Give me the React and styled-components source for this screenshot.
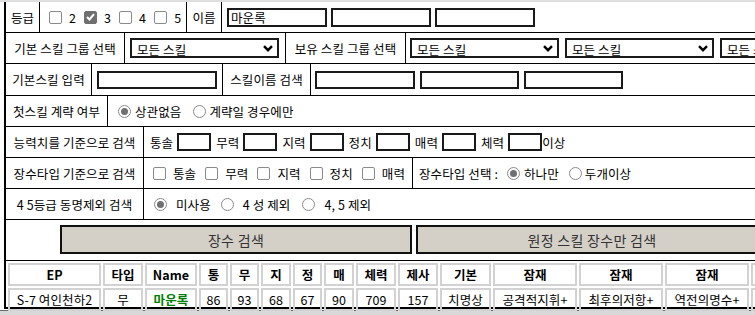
import React from "react";
import styled, { createGlobalStyle } from "styled-components";

const GlobalStyle = createGlobalStyle`
  html, body {
    margin: 0;
    padding: 0;
    background: #fff;
    overflow: hidden;
  }
  body {
    font-family: "Noto Sans CJK KR", "Noto Sans", sans-serif;
    font-size: 12.5px;
    color: #000;
    letter-spacing: 0.1px;
  }
`;

const Page = styled.div`
  width: 755px;
  height: 315px;
  overflow: hidden;
`;

const TopBar = styled.div`
  height: 2px;
  background: #dedede;
`;

const Frame = styled.div`
  margin-left: 4px;
  width: 1100px;
  border-left: 2px solid #000;
  border-bottom: 2px solid #000;
`;

const Row = styled.div`
  display: flex;
  box-sizing: border-box;
  height: ${(p) => p.$h || 31}px;
  border-bottom: ${(p) => (p.$last ? "none" : "1px solid #000")};
`;

const Label = styled.div`
  flex: 0 0 ${(p) => p.$w}px;
  min-width: 0;
  box-sizing: border-box;
  border-right: 1px solid #000;
  display: flex;
  align-items: center;
  justify-content: center;
  white-space: nowrap;
`;

const Field = styled.div`
  flex: ${(p) => (p.$w ? `0 0 ${p.$w}px` : "1 1 auto")};
  min-width: 0;
  box-sizing: border-box;
  border-right: ${(p) => (p.$w ? "1px solid #000" : "none")};
  display: flex;
  align-items: center;
  gap: ${(p) => p.$gap || 0}px;
  padding-left: ${(p) => p.$pl ?? 6}px;
  white-space: nowrap;
`;

const Text = styled.span`
  margin-right: ${(p) => p.$mr || 0}px;
`;

const TextInput = styled.input`
  box-sizing: border-box;
  flex: none;
  width: ${(p) => p.$w}px;
  height: ${(p) => p.$h || 18}px;
  margin: 0 ${(p) => p.$mr || 0}px 0 0;
  border: 2px solid #1a1a1a;
  padding: 0 2px;
  font: inherit;
  letter-spacing: inherit;
  color: #000;
  background: #fff;
  outline: none;
`;

const SelectWrap = styled.span`
  position: relative;
  display: inline-block;
  flex: none;
  height: 20px;
`;

const Select = styled.select`
  appearance: none;
  box-sizing: border-box;
  width: 149px;
  height: 20px;
  border: 2px solid #1a1a1a;
  border-radius: 0;
  padding: 0 0 0 5px;
  font: inherit;
  letter-spacing: inherit;
  color: #000;
  background: #fff;
`;

const Chevron = styled.svg`
  position: absolute;
  right: 6px;
  top: 7px;
  pointer-events: none;
`;

const Option = styled.label`
  display: inline-flex;
  align-items: center;
  flex: none;
  gap: ${(p) => p.$gap ?? 7}px;
  margin-right: ${(p) => p.$mr ?? 8}px;
  white-space: nowrap;
`;

const Box = styled.span`
  flex: none;
  box-sizing: border-box;
  width: 13px;
  height: 13px;
  border-radius: ${(p) => (p.$round ? "50%" : "2px")};
  border: 1px solid ${(p) => (p.$on && !p.$round ? "#6f6f6f" : "#8a8a8a")};
  background: ${(p) => (p.$on && !p.$round ? "#6f6f6f" : "#fff")};
  display: inline-flex;
  align-items: center;
  justify-content: center;
`;

const Dot = styled.span`
  width: 7px;
  height: 7px;
  border-radius: 50%;
  background: #707070;
`;

const ButtonRow = styled(Row)`
  padding: 5px 0 0 54px;
  gap: 4px;
  align-items: flex-start;
`;

const Button = styled.button`
  box-sizing: border-box;
  width: 352px;
  height: 29px;
  flex: none;
  background: #d4d0c8;
  border: 2px solid #111;
  font-family: inherit;
  font-size: 14px;
  letter-spacing: 0.3px;
  color: #333;
  padding: 0;
`;

const TableRow = styled(Row)`
  height: 46px;
`;

const Grid = styled.table`
  border-collapse: separate;
  border-spacing: 2px;
  height: 46px;
`;

const Cell = styled.td`
  box-sizing: border-box;
  width: ${(p) => p.$w}px;
  min-width: ${(p) => p.$w}px;
  max-width: ${(p) => p.$w}px;
  height: 20px;
  padding: 0;
  border: 2px solid #d2d2d2;
  text-align: center;
  white-space: nowrap;
  overflow: hidden;
  font-weight: ${(p) => (p.$head || p.$green ? "bold" : "normal")};
  color: ${(p) => (p.$green ? "#008000" : "#000")};
`;

const Footer = styled.div`
  margin-top: 1px;
  height: 10px;
  border-top: 1px solid #6a6a6a;
  background: #d9d9d9;
`;

function Check({ on, children, gap, mr }) {
  return (
    <Option $gap={gap} $mr={mr}>
      <Box $on={on}>
        {on && (
          <svg width="9" height="8" viewBox="0 0 9 8">
            <path d="M1 4 L3.5 6.5 L8 1.2" fill="none" stroke="#fff" strokeWidth="2" />
          </svg>
        )}
      </Box>
      {children}
    </Option>
  );
}

function Radio({ on, children, gap, mr }) {
  return (
    <Option $gap={gap} $mr={mr}>
      <Box $round $on={on}>{on && <Dot />}</Box>
      {children}
    </Option>
  );
}

function SkillSelect() {
  return (
    <SelectWrap>
      <Select defaultValue="all">
        <option value="all">모든 스킬</option>
      </Select>
      <Chevron width="10" height="7" viewBox="0 0 10 7">
        <path d="M1 1.2 L5 5.2 L9 1.2" fill="none" stroke="#000" strokeWidth="2.4" />
      </Chevron>
    </SelectWrap>
  );
}

const columns = [
  ["EP", 93, "S-7 여인천하2"],
  ["타입", 40, "무"],
  ["Name", 52, "마운록"],
  ["통", 29, "86"],
  ["무", 29, "93"],
  ["지", 30, "68"],
  ["정", 29, "67"],
  ["매", 30, "90"],
  ["체력", 40, "709"],
  ["제사", 40, "157"],
  ["기본", 51, "치명상"],
  ["잠재", 84, "공격적지휘+"],
  ["잠재", 84, "최후의저항+"],
  ["잠재", 84, "역전의명수+"],
  ["", 84, ""],
];

const stats = ["통솔", "무력", "지력", "정치", "매력", "체력"];

export default function App() {
  return (
    <Page>
      <GlobalStyle />
      <TopBar />
      <Frame>
        <Row>
          <Label $w={34}>등급</Label>
          <Field $w={147} $pl={9}>
            {["2", "3", "4", "5"].map((n) => (
              <Check key={n} on={n === "3"} gap={7} mr={n === "5" ? 0 : 8}>
                {n}
              </Check>
            ))}
          </Field>
          <Label $w={35}>이름</Label>
          <Field $pl={5} $gap={4}>
            <TextInput $w={100} $h={19} defaultValue="마운록" />
            <TextInput $w={100} $h={19} />
            <TextInput $w={100} $h={19} />
          </Field>
        </Row>

        <Row>
          <Label $w={119}>기본 스킬 그룹 선택</Label>
          <Field $w={161} $pl={5}>
            <SkillSelect />
          </Field>
          <Label $w={120}>보유 스킬 그룹 선택</Label>
          <Field $pl={4} $gap={6}>
            <SkillSelect />
            <SkillSelect />
            <SkillSelect />
          </Field>
        </Row>

        <Row $h={32}>
          <Label $w={86}>기본스킬 입력</Label>
          <Field $w={131} $pl={5}>
            <TextInput $w={120} />
          </Field>
          <Label $w={88}>스킬이름 검색</Label>
          <Field $pl={4} $gap={5}>
            <TextInput $w={100} />
            <TextInput $w={99} />
            <TextInput $w={99} />
          </Field>
        </Row>

        <Row>
          <Label $w={102}>첫스킬 계략 여부</Label>
          <Field $pl={10}>
            <Radio on gap={4} mr={12}>상관없음</Radio>
            <Radio gap={3}>계략일 경우에만</Radio>
          </Field>
        </Row>

        <Row>
          <Label $w={138}>능력치를 기준으로 검색</Label>
          <Field $pl={6}>
            {stats.map((s, i) => (
              <React.Fragment key={s}>
                <Text $mr={4}>{s}</Text>
                <TextInput $w={34} $mr={i === stats.length - 1 ? 0 : 5} />
              </React.Fragment>
            ))}
            <Text>이상</Text>
          </Field>
        </Row>

        <Row>
          <Label $w={138}>장수타입 기준으로 검색</Label>
          <Field $w={269} $pl={9}>
            {stats.slice(0, 5).map((s, i) => (
              <Check key={s} gap={7} mr={i === 4 ? 0 : 9}>
                {s}
              </Check>
            ))}
          </Field>
          <Field $pl={6}>
            <Text $mr={9}>장수타입 선택 :</Text>
            <Radio on gap={4} mr={10}>하나만</Radio>
            <Radio gap={3}>두개이상</Radio>
          </Field>
        </Row>

        <Row>
          <Label $w={138}>4 5등급 동명제외 검색</Label>
          <Field $pl={10}>
            <Radio on gap={9} mr={10}>미사용</Radio>
            <Radio gap={9} mr={12}>4 성 제외</Radio>
            <Radio gap={9}>4, 5 제외</Radio>
          </Field>
        </Row>

        <ButtonRow $h={41}>
          <Button>장수 검색</Button>
          <Button>원정 스킬 장수만 검색</Button>
        </ButtonRow>

        <TableRow $last>
          <Grid>
            <tbody>
              <tr>
                {columns.map(([head, w], i) => (
                  <Cell key={i} $w={w} $head>
                    {head}
                  </Cell>
                ))}
              </tr>
              <tr>
                {columns.map(([, w, value], i) => (
                  <Cell key={i} $w={w} $green={i === 2}>
                    {value}
                  </Cell>
                ))}
              </tr>
            </tbody>
          </Grid>
        </TableRow>
      </Frame>
      <Footer />
    </Page>
  );
}
